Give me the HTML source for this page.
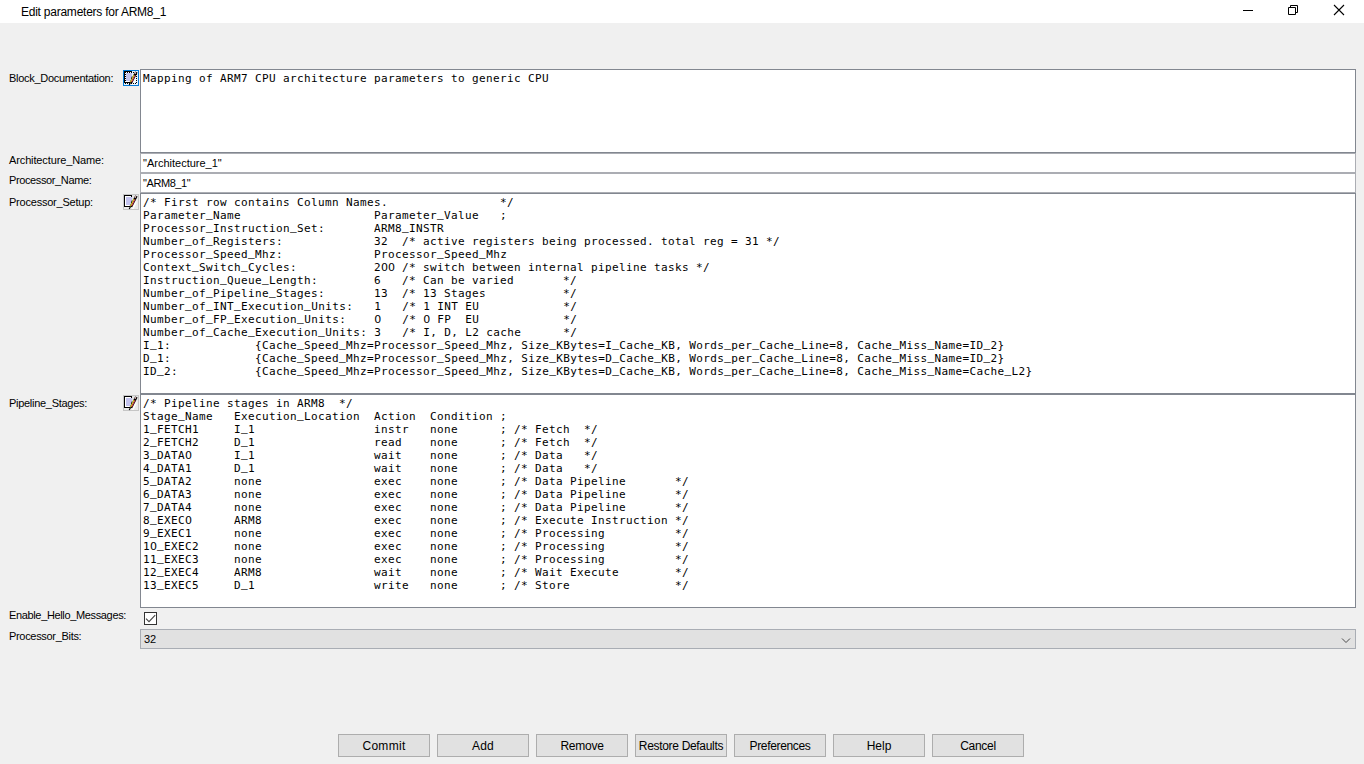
<!DOCTYPE html>
<html>
<head>
<meta charset="utf-8">
<title>Edit parameters for ARM8_1</title>
<style>
html,body{margin:0;padding:0;}
body{width:1364px;height:764px;overflow:hidden;background:#f0f0f0;position:relative;font-family:"Liberation Sans",sans-serif;color:#000;}
.abs{position:absolute;}
#titlebar{left:0;top:0;width:1364px;height:23px;background:#fff;}
#title{left:21px;top:4px;font-size:12px;line-height:16px;white-space:nowrap;letter-spacing:-0.24px;}
.lbl{left:9px;font-size:11px;line-height:14px;white-space:nowrap;}
.ta{left:140px;width:1214px;background:#fff;border:1px solid #828790;}
.tf{left:140px;width:1214px;height:18px;background:#fff;border:1px solid #abadb3;}
.tf span{position:absolute;left:2px;top:2px;font-size:11px;line-height:14px;white-space:nowrap;}
pre{margin:0;position:absolute;left:2px;top:2px;font-family:"DejaVu Sans Mono","Liberation Mono",monospace;font-size:11px;line-height:13px;letter-spacing:0.3775px;white-space:pre;}
pre u{text-decoration:none;position:relative;top:-2px;text-shadow:0 0 0 #000;}
pre i{font-style:normal;font-family:"DejaVu Sans","Liberation Sans",sans-serif;letter-spacing:0;display:inline-block;width:7px;text-align:center;}
.btn{top:734px;width:90px;height:21px;border:1px solid #adadad;background:#e1e1e1;font-size:12px;line-height:23px;text-align:center;white-space:nowrap;}
.ico{left:123px;width:16px;height:16px;}
</style>
</head>
<body>
<div id="titlebar" class="abs"></div>
<div id="title" class="abs">Edit parameters for ARM8_1</div>
<svg class="abs" style="left:1236px;top:0" width="128" height="23" viewBox="0 0 128 23">
<path d="M7 10.5H17" stroke="#000" stroke-width="1" fill="none"/>
<path d="M52.5 7.5H59.5V14.5H52.5Z M54.5 7.5V5.5H61.5V12.5H59.5" stroke="#000" stroke-width="1" fill="none"/>
<path d="M98 5L108 15M108 5L98 15" stroke="#000" stroke-width="1.1" fill="none"/>
</svg>

<div class="abs lbl" style="top:71px;letter-spacing:-0.295px">Block_Documentation:</div>
<div class="abs lbl" style="top:153px;letter-spacing:-0.124px">Architecture_Name:</div>
<div class="abs lbl" style="top:173px;letter-spacing:-0.379px">Processor_Name:</div>
<div class="abs lbl" style="top:195px;letter-spacing:-0.22px">Processor_Setup:</div>
<div class="abs lbl" style="top:396px;letter-spacing:-0.287px">Pipeline_Stages:</div>
<div class="abs lbl" style="top:608px;letter-spacing:-0.352px">Enable_Hello_Messages:</div>
<div class="abs lbl" style="top:629px;letter-spacing:-0.314px">Processor_Bits:</div>

<div class="abs ta" style="top:69px;height:82px"><pre>Mapping of ARM7 CPU architecture parameters to generic CPU</pre></div>
<div class="abs tf" style="top:153px"><span>"Architecture_1"</span></div>
<div class="abs tf" style="top:173px"><span style="letter-spacing:-0.42px">"ARM8_1"</span></div>
<div class="abs ta" style="top:193px;height:199px"><pre>/* First row contains Column Names.                */
Parameter<u>_</u>Name                   Parameter<u>_</u>Value   ;
Processor<u>_</u>Instruction<u>_</u>Set:       ARM8<u>_</u>INSTR
Number<u>_</u>of<u>_</u>Registers:             32  /* active registers being processed. total reg = 31 */
Processor<u>_</u>Speed<u>_</u>Mhz:             Processor<u>_</u>Speed<u>_</u>Mhz
Context<u>_</u>Switch<u>_</u>Cycles:           2<i>0</i><i>0</i> /* switch between internal pipeline tasks */
Instruction<u>_</u>Queue<u>_</u>Length:        6   /* Can be varied       */
Number<u>_</u>of<u>_</u>Pipeline<u>_</u>Stages:       13  /* 13 Stages           */
Number<u>_</u>of<u>_</u>INT<u>_</u>Execution<u>_</u>Units:   1   /* 1 INT EU            */
Number<u>_</u>of<u>_</u>FP<u>_</u>Execution<u>_</u>Units:    <i>0</i>   /* <i>0</i> FP  EU            */
Number<u>_</u>of<u>_</u>Cache<u>_</u>Execution<u>_</u>Units: 3   /* I, D, L2 cache      */
I<u>_</u>1:            {Cache<u>_</u>Speed<u>_</u>Mhz=Processor<u>_</u>Speed<u>_</u>Mhz, Size<u>_</u>KBytes=I<u>_</u>Cache<u>_</u>KB, Words<u>_</u>per<u>_</u>Cache<u>_</u>Line=8, Cache<u>_</u>Miss<u>_</u>Name=ID<u>_</u>2}
D<u>_</u>1:            {Cache<u>_</u>Speed<u>_</u>Mhz=Processor<u>_</u>Speed<u>_</u>Mhz, Size<u>_</u>KBytes=D<u>_</u>Cache<u>_</u>KB, Words<u>_</u>per<u>_</u>Cache<u>_</u>Line=8, Cache<u>_</u>Miss<u>_</u>Name=ID<u>_</u>2}
ID<u>_</u>2:           {Cache<u>_</u>Speed<u>_</u>Mhz=Processor<u>_</u>Speed<u>_</u>Mhz, Size<u>_</u>KBytes=D<u>_</u>Cache<u>_</u>KB, Words<u>_</u>per<u>_</u>Cache<u>_</u>Line=8, Cache<u>_</u>Miss<u>_</u>Name=Cache<u>_</u>L2}</pre></div>
<div class="abs ta" style="top:394px;height:212px"><pre>/* Pipeline stages in ARM8  */
Stage<u>_</u>Name   Execution<u>_</u>Location  Action  Condition ;
1<u>_</u>FETCH1     I<u>_</u>1                 instr   none      ; /* Fetch  */
2<u>_</u>FETCH2     D<u>_</u>1                 read    none      ; /* Fetch  */
3<u>_</u>DATA<i>0</i>      I<u>_</u>1                 wait    none      ; /* Data   */
4<u>_</u>DATA1      D<u>_</u>1                 wait    none      ; /* Data   */
5<u>_</u>DATA2      none                exec    none      ; /* Data Pipeline       */
6<u>_</u>DATA3      none                exec    none      ; /* Data Pipeline       */
7<u>_</u>DATA4      none                exec    none      ; /* Data Pipeline       */
8<u>_</u>EXEC<i>0</i>      ARM8                exec    none      ; /* Execute Instruction */
9<u>_</u>EXEC1      none                exec    none      ; /* Processing          */
1<i>0</i><u>_</u>EXEC2     none                exec    none      ; /* Processing          */
11<u>_</u>EXEC3     none                exec    none      ; /* Processing          */
12<u>_</u>EXEC4     ARM8                wait    none      ; /* Wait Execute        */
13<u>_</u>EXEC5     D<u>_</u>1                 write   none      ; /* Store               */</pre></div>

<svg class="abs ico" style="top:70px" width="16" height="16" viewBox="0 0 16 16"><rect x="0.5" y="0.5" width="15" height="15" fill="#e5f1fb" stroke="#0078d7"/><path d="M8.5 15L13.5 5L13.5 9L10.5 15Z" fill="#fff" opacity="0.9"/><rect x="1.5" y="1.5" width="7" height="11" fill="#fff" stroke="#000"/><path d="M2 2.5H14M2 13.5H14M2.5 2V14M13.5 2V14" stroke="#000" stroke-width="1" stroke-dasharray="1 1" fill="none"/><path d="M3 3H9V6L7 11H3Z" fill="#c3c3ee"/><path d="M6.2 14.9L7.6 12.4" stroke="#000" stroke-width="1.1" fill="none"/><path d="M7.9 12.6L13.4 2.0" stroke="#000" stroke-width="2.7" fill="none"/><path d="M7.5 12.2L11.1 5.0" stroke="#e2e21e" stroke-width="1.05" fill="none"/><path d="M8.6 12.0L12.0 5.3" stroke="#e23c64" stroke-width="1.0" fill="none"/><path d="M12.0 3.7L12.8 2.3" stroke="#f6c4c4" stroke-width="1.3" fill="none"/></svg>
<svg class="abs ico" style="top:194px" width="16" height="16" viewBox="0 0 16 16"><rect x="0.5" y="0.5" width="15" height="15" fill="#e4e4e4" stroke="#c6c6c6"/><path d="M1 15L1 13.5L15 1L15 15Z" fill="#ebebeb"/><path d="M8.5 15L13.5 5L13.5 9L10.5 15Z" fill="#fff" opacity="0.9"/><rect x="1.5" y="1.5" width="7" height="11" fill="#fff" stroke="#000"/><path d="M3 3H9V6L7 11H3Z" fill="#c3c3ee"/><path d="M6.2 14.9L7.6 12.4" stroke="#000" stroke-width="1.1" fill="none"/><path d="M7.9 12.6L13.4 2.0" stroke="#000" stroke-width="2.7" fill="none"/><path d="M7.5 12.2L11.1 5.0" stroke="#e2e21e" stroke-width="1.05" fill="none"/><path d="M8.6 12.0L12.0 5.3" stroke="#e23c64" stroke-width="1.0" fill="none"/><path d="M12.0 3.7L12.8 2.3" stroke="#f6c4c4" stroke-width="1.3" fill="none"/></svg>
<svg class="abs ico" style="top:395px" width="16" height="16" viewBox="0 0 16 16"><rect x="0.5" y="0.5" width="15" height="15" fill="#e4e4e4" stroke="#c6c6c6"/><path d="M1 15L1 13.5L15 1L15 15Z" fill="#ebebeb"/><path d="M8.5 15L13.5 5L13.5 9L10.5 15Z" fill="#fff" opacity="0.9"/><rect x="1.5" y="1.5" width="7" height="11" fill="#fff" stroke="#000"/><path d="M3 3H9V6L7 11H3Z" fill="#c3c3ee"/><path d="M6.2 14.9L7.6 12.4" stroke="#000" stroke-width="1.1" fill="none"/><path d="M7.9 12.6L13.4 2.0" stroke="#000" stroke-width="2.7" fill="none"/><path d="M7.5 12.2L11.1 5.0" stroke="#e2e21e" stroke-width="1.05" fill="none"/><path d="M8.6 12.0L12.0 5.3" stroke="#e23c64" stroke-width="1.0" fill="none"/><path d="M12.0 3.7L12.8 2.3" stroke="#f6c4c4" stroke-width="1.3" fill="none"/></svg>
<!-- checkbox -->
<div class="abs" style="left:144px;top:612px;width:11px;height:11px;border:1px solid #333;background:#fff"></div>
<svg class="abs" style="left:144px;top:612px" width="13" height="13" viewBox="0 0 13 13"><path d="M2 6.7L5 9.6L11.2 3.2" stroke="#444" stroke-width="1.1" fill="none"/></svg>

<!-- combo -->
<div class="abs" style="left:140px;top:629px;width:1214px;height:18px;border:1px solid #a9adb4;background:#e1e1e1"><span class="abs" style="left:3px;top:2px;font-size:11px;line-height:14px">32</span></div>
<svg class="abs" style="left:1340px;top:636px" width="12" height="8" viewBox="0 0 12 8"><path d="M2 2.5L6 6.5L10 2.5" stroke="#4a4a4a" stroke-width="1" fill="none"/></svg>

<div class="abs btn" style="left:338px;letter-spacing:0.3px">Commit</div>
<div class="abs btn" style="left:437px;letter-spacing:0.15px">Add</div>
<div class="abs btn" style="left:536px;letter-spacing:-0.26px">Remove</div>
<div class="abs btn" style="left:635px;letter-spacing:-0.32px">Restore Defaults</div>
<div class="abs btn" style="left:734px;letter-spacing:-0.33px">Preferences</div>
<div class="abs btn" style="left:833px">Help</div>
<div class="abs btn" style="left:932px;letter-spacing:-0.28px">Cancel</div>
</body>
</html>
